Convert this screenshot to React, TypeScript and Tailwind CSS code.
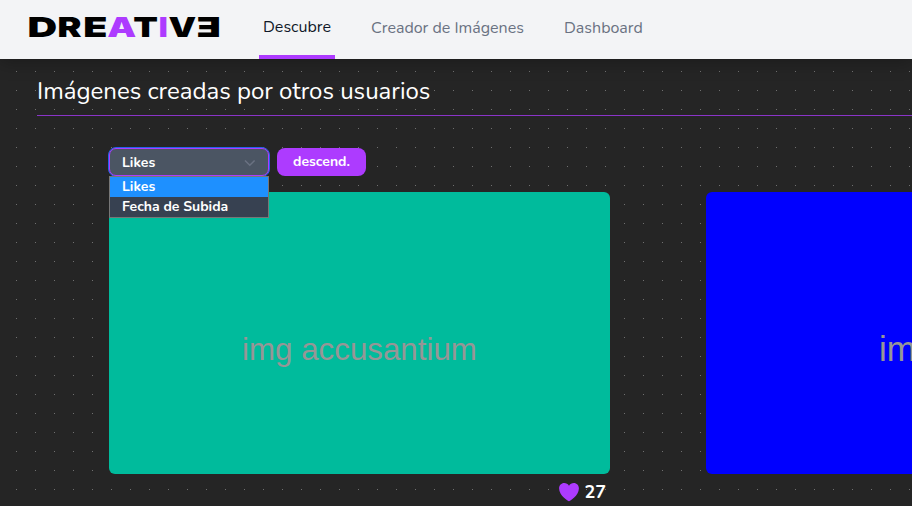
import React from "react";

const LETTERS = [
  { ch: "D", x: 27.4, w: 29.7, fill: "#000" },
  { ch: "R", x: 57.6, w: 24.0, fill: "#000" },
  { ch: "E", x: 83.2, w: 24.2, fill: "#000" },
  { ch: "A", x: 107.3, w: 29, fill: "#ad3bff" },
  { ch: "T", x: 133.3, w: 24.7, fill: "#000" },
  { ch: "I", x: 158.8, w: 9, fill: "#ad3bff" },
  { ch: "V", x: 168.4, w: 27.7, fill: "#000" },
  { ch: "Ǝ", x: 196.4, w: 24.3, fill: "#000" },
];

function Logo() {
  return (
    <svg className="h-[59px] w-[230px] shrink-0" viewBox="0 0 230 59" aria-label="DREATIVE">
      {LETTERS.map((l, i) => (
        <text
          key={i}
          x={l.x}
          y="37"
          fill={l.fill}
          fontSize="27.6"
          fontWeight="900"
          fontFamily="Inter, sans-serif"
          textLength={l.w}
          lengthAdjust="spacingAndGlyphs"
        >
          {l.ch}
        </text>
      ))}
    </svg>
  );
}

function Header() {
  return (
    <header className="relative z-10 flex h-[59px] bg-[#f3f4f6] shadow-[0_4px_16px_rgba(0,0,0,0.25)]">
      <Logo />
      <nav className="flex whitespace-nowrap text-base leading-6 text-gray-500">
        <a className="ml-[29px] w-[76px] border-b-4 border-[#ad3bff] pt-[15px] pl-1 text-gray-900">Descubre</a>
        <a className="ml-9 w-[153px] pt-4">Creador de Imágenes</a>
        <a className="ml-10 pt-4">Dashboard</a>
      </nav>
    </header>
  );
}

function Controls() {
  return (
    <div className="flex gap-[7px] text-sm leading-5 font-bold text-white">
      <div className="relative w-[162px]">
        <div className="flex h-[30px] rounded-lg border border-[#2563eb] bg-[#4b5563]">
          <div className="flex w-full items-center justify-between rounded-[7px] border border-[#ad3bff] px-3 pt-px">
            <span>Likes</span>
            <svg className="h-3 w-3 text-gray-500" viewBox="0 0 12 12" fill="none" stroke="currentColor" strokeWidth="1.5">
              <path d="M1 3.5 5.800 8.300l4.800-4.800" />
            </svg>
          </div>
        </div>
        <ul className="absolute top-[29px] left-px z-10 w-[160px] border border-[#777] bg-[#374151]">
          <li className="h-5 bg-[#1e90ff] pl-3 leading-[19px]">Likes</li>
          <li className="h-5 pl-3 leading-[19px]">Fecha de Subida</li>
        </ul>
      </div>
      <button className="mt-px h-7 w-[89px] rounded-lg bg-[#ad3bff] pb-px leading-[26px]">descend.</button>
    </div>
  );
}

function Heart() {
  return (
    <svg className="h-5 w-[21px]" viewBox="0 0 21 20" fill="#ad3bff">
      <path d="M11 19.200C10.300 19.200 1.100 13.500 1.100 6.400 1.100 3.300 3.300 1 6.200 1 8.200 1 10 2 11 3.700 12 2 13.800 1 15.800 1c2.900 0 5.100 2.300 5.100 5.400 0 7.100-9.200 12.800-9.900 12.800Z" />
    </svg>
  );
}

function FirstCard() {
  return (
    <article className="w-[501px] shrink-0">
      <div className="flex h-[282px] items-center justify-center rounded-md bg-[#00bb9c] pt-[34px] font-['Liberation_Sans',sans-serif] text-[31.3px] text-[#969696]">
        img accusantium
      </div>
      <div className="flex items-center justify-end gap-[5px] pt-1 pr-1 text-lg leading-7 font-bold text-white">
        <Heart />
        <span>27</span>
      </div>
    </article>
  );
}

function SecondCard() {
  return (
    <article className="w-[501px] shrink-0">
      <div className="flex h-[282px] items-center rounded-md bg-[#0000ff] pt-8 pl-[173px] font-['Liberation_Sans',sans-serif] text-[35px] text-[#969696]">
        img natus
      </div>
    </article>
  );
}

export default function App() {
  return (
    <div className="h-[506px] w-[912px] overflow-hidden bg-[#252525] bg-[radial-gradient(circle_at_center,#707070_0.6px,transparent_0.7px)] bg-[length:19px_19px] bg-[position:7px_5px] font-['Nunito','Open_Sans',sans-serif]">
      <Header />
      <main className="pl-[37px]">
        <h1 className="h-[57px] w-[900px] border-b border-[#8a34c8] pt-4 text-2xl leading-8 whitespace-nowrap text-white">
          Imágenes creadas por otros usuarios
        </h1>
        <div className="pt-[31px] pl-[71px]">
          <Controls />
          <div className="ml-px flex gap-24 pt-[15px]">
            <FirstCard />
            <SecondCard />
          </div>
        </div>
      </main>
    </div>
  );
}
